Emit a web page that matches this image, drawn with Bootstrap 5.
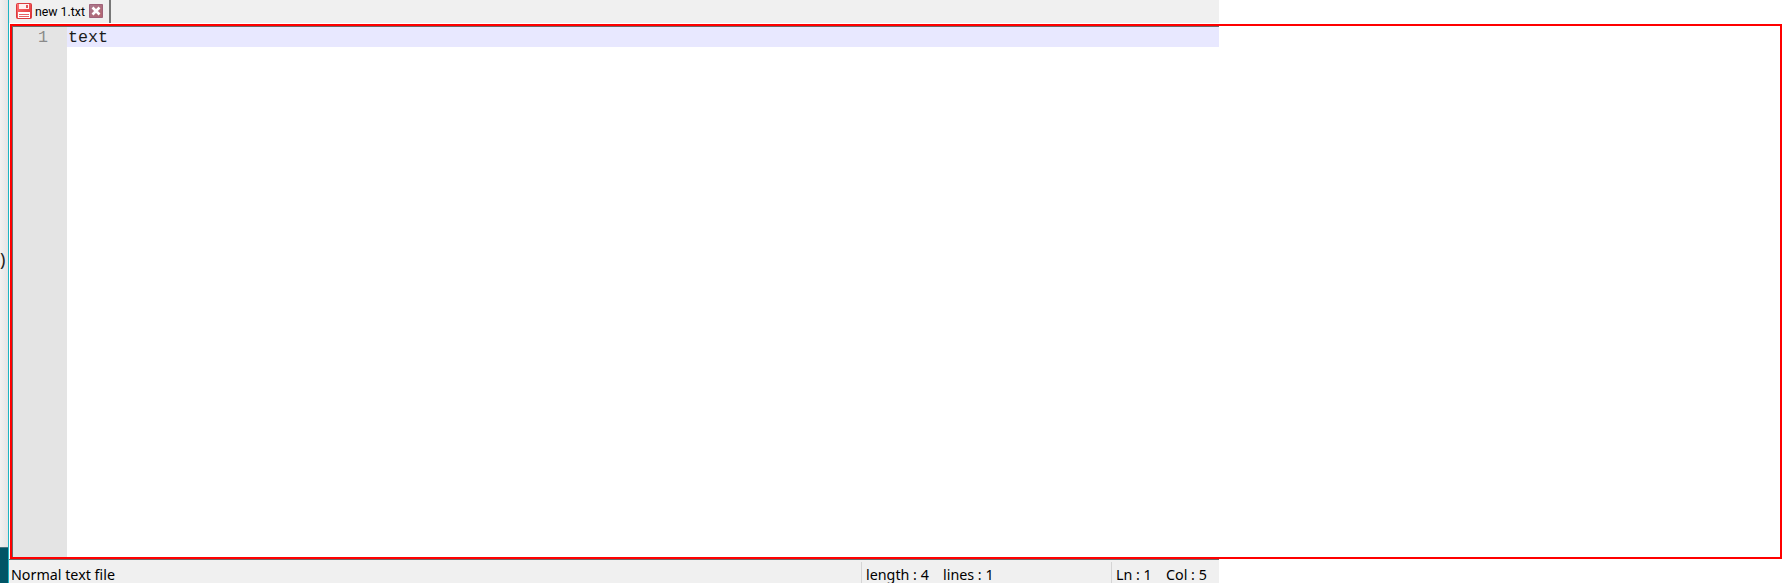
<!DOCTYPE html>
<html lang="en">
<head>
<meta charset="utf-8">
<title>new 1.txt</title>
<link href="https://cdn.jsdelivr.net/npm/bootstrap@5.3.0/dist/css/bootstrap.min.css" rel="stylesheet">
<style>
html{height:583px;overflow:hidden}
body{height:583px;background:#fff;color:#000}
.desk{width:8px;background:linear-gradient(90deg,#f1f1f1,#e4e4e4)}
.behind{height:547px;padding-top:247px;font:18px/24px "Noto Sans",sans-serif;color:#222}
.teal{background:#005566;border-top:1px solid #4b7480}
.win{width:1211px;border-left:1px solid #1eb4c4;background:#f0f0f0}
.tabs{height:23px}
.file-tab{width:102px;border-right:2px solid #777;padding:3px 0 0 7px;font:12.3px/18px Roboto,sans-serif}
.file-tab span{width:57px;padding-left:3px;white-space:nowrap}
.close-icon{margin-top:1px}
.edit{height:536px;border-top:1px solid #fff;padding-top:2px;border-left:1px solid #fff}
.inner{border:solid #696969;border-width:1px 0 0 1px;margin-left:2px;background:#fff}
.gutter{width:54px;background:#e4e4e4;color:#8a8a8a;padding-right:19px}
.code-area{font:16.67px/20px "Liberation Mono",monospace}
.gutter,.line{line-height:21px}
.line{height:20px;background:#e8e8ff;padding-left:1px;color:#1c1c1c}
.status{height:24px;border-top:1px solid #696969;font:14.3px/16px "Noto Sans",sans-serif;padding-top:7px;white-space:pre}
.status>div{padding-left:5px;position:relative}
.status>div+div::before{content:"";position:absolute;left:0;top:-5px;height:21px;border-left:1px solid #d5d5d5}
.frame{left:10px;top:24px;width:1772px;height:535px;border:2px solid #f00}
</style>
</head>
<body class="d-flex overflow-hidden position-relative">
<div class="desk d-flex flex-column overflow-hidden flex-shrink-0"><div class="behind flex-shrink-0">)</div><div class="teal flex-grow-1"></div></div>
<main class="win d-flex flex-column flex-shrink-0">
  <div class="tabs d-flex flex-shrink-0">
    <div class="file-tab d-flex">
      <svg width="16" height="16" viewBox="0 0 16 16" class="flex-shrink-0"><defs><linearGradient id="r" x2="1" y2="1"><stop stop-color="#ff7777"/><stop offset="1" stop-color="#dc2c30"/></linearGradient></defs><rect x=".5" y=".5" width="15" height="15" rx="1" fill="url(#r)" stroke="#dc3a3e"/><path d="M3 1h10v5H3z" fill="#fff0f0"/><path d="M10 2h2v3h-2z" fill="#e25458"/><path d="M2 9h12v6H2z" fill="#fff"/><path d="M3 11.5h10M3 13.5h10" stroke="#e66367"/></svg>
      <span>new 1.txt</span>
      <svg width="14" height="14" viewBox="0 0 14 14" class="flex-shrink-0 close-icon"><defs><linearGradient id="c" y2="1"><stop stop-color="#a9798f"/><stop offset="1" stop-color="#b4646e"/></linearGradient></defs><path d="M.5.5h13v13H.5z" fill="url(#c)" stroke="#a0627a"/><path d="m3.5 3.5 7 7m0-7-7 7" stroke="#fff" stroke-width="2.6"/></svg>
    </div>
  </div>
  <div class="edit flex-shrink-0"><div class="inner d-flex h-100 code-area">
    <div class="gutter text-end">1</div>
    <div class="flex-grow-1"><div class="line">text</div></div>
  </div></div>
  <div class="status d-flex flex-shrink-0">
    <div style="width:852px;padding-left:2px"><span>Normal text file</span></div>
    <div style="width:250px" class="d-flex"><span style="width:77px">length : 4</span><span>lines : 1</span></div>
    <div class="d-flex"><span style="width:50px">Ln : 1</span><span>Col : 5</span></div>
  </div>
</main>
<div class="frame position-absolute"></div>
<script src="https://cdn.jsdelivr.net/npm/bootstrap@5.3.0/dist/js/bootstrap.bundle.min.js"></script>
</body>
</html>
